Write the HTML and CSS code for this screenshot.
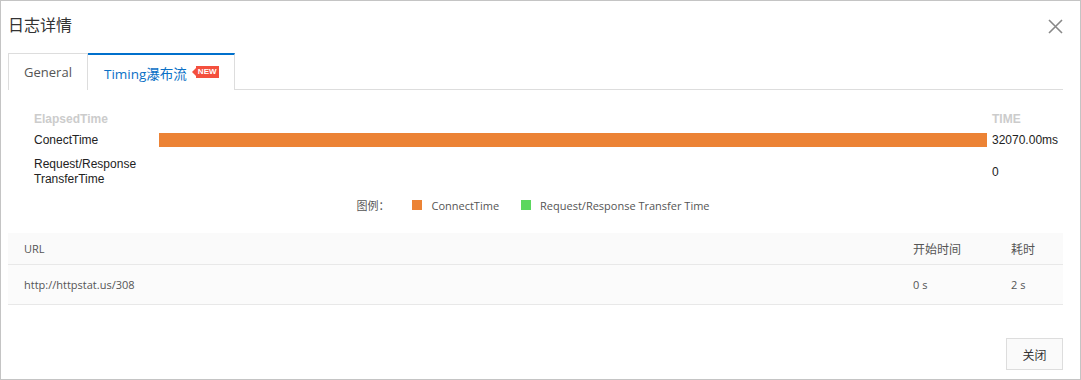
FILE: index.html
```html
<!DOCTYPE html>
<html lang="zh">
<head>
    <meta charset="UTF-8">
    <title>日志详情</title>
    <link rel="stylesheet" href="styles.css">
</head>
<body>
    <div class="dialog">
        <div class="dialog-header">
            <h2 class="dialog-title">日志详情</h2>
            <span class="dialog-close">
                <svg width="15" height="15" viewBox="0 0 15 15"><path d="M1 1L14 14M14 1L1 14" stroke="#888" stroke-width="1.6" fill="none"/></svg>
            </span>
        </div>
        <div class="tabs">
            <div class="tab">General</div>
            <div class="tab active">Timing瀑布流<span class="badge">NEW</span></div>
        </div>

        <div class="chart">
            <div class="chart-head">ElapsedTime</div>
            <div></div>
            <div class="chart-head chart-value">TIME</div>

            <div class="chart-label">ConectTime</div>
            <div class="chart-track"><div class="chart-bar connect" style="width: 100%"></div></div>
            <div class="chart-value">32070.00ms</div>

            <div class="chart-label">Request/Response<br>TransferTime</div>
            <div class="chart-track"><div class="chart-bar transfer" style="width: 0%"></div></div>
            <div class="chart-value">0</div>
        </div>

        <div class="legend">
            <span class="legend-title">图例：</span>
            <span class="legend-item"><i class="swatch connect"></i>ConnectTime</span>
            <span class="legend-item"><i class="swatch transfer"></i>Request/Response Transfer Time</span>
        </div>

        <table class="grid">
            <thead>
                <tr>
                    <th>URL</th>
                    <th class="col-start cjk">开始时间</th>
                    <th class="col-cost cjk">耗时</th>
                </tr>
            </thead>
            <tbody>
                <tr>
                    <td>http://httpstat.us/308</td>
                    <td>0 s</td>
                    <td>2 s</td>
                </tr>
            </tbody>
        </table>

        <div class="dialog-footer">
            <button class="btn">关闭</button>
        </div>
    </div>
</body>
</html>
```

FILE: styles.css
```css
body {
    margin: 0;
    padding: 0;
    font-family: "Open Sans", "Noto Sans CJK SC", sans-serif;
    color: #333;
    background: #fff;
}
.dialog {
    width: 1081px;
    height: 380px;
    box-sizing: border-box;
    border: 1px solid #c4c4c4;
    padding: 0 17px 0 7px;
    display: flex;
    flex-direction: column;
}
.dialog-header {
    height: 52px;
    display: flex;
    align-items: center;
    justify-content: space-between;
}
.dialog-title {
    margin: 0;
    font-size: 16px;
    font-weight: normal;
    font-family: "Noto Sans CJK SC", sans-serif;
    color: #333;
    position: relative;
    top: -3px;
}
.dialog-close {
    display: flex;
    position: relative;
    top: -1px;
}
.tabs {
    display: flex;
    height: 36px;
    border-bottom: 1px solid #ddd;
}
.tab {
    box-sizing: border-box;
    height: 37px;
    padding: 0 16px;
    display: flex;
    align-items: center;
    font-size: 13px;
    color: #555;
    border: 1px solid #ddd;
    border-bottom: none;
    background: #fff;
    margin-bottom: -1px;
}
.tab:first-child {
    width: 80px;
    justify-content: center;
    padding: 0;
}
.tab.active {
    color: #0a70c6;
    border-top: 2px solid #0070cc;
    border-left: none;
    font-size: 13.5px;
    padding-right: 15px;
}
.badge {
    position: relative;
    margin-left: 9px;
    background: #f4503e;
    color: #fff;
    font-family: "Liberation Sans", sans-serif;
    font-size: 8px;
    font-weight: bold;
    line-height: 12px;
    height: 12px;
    padding: 0 2px;
    top: -1px;
}
.badge::before {
    content: "";
    position: absolute;
    left: -4px;
    top: 2px;
    border-top: 4px solid transparent;
    border-bottom: 4px solid transparent;
    border-right: 4px solid #f4503e;
}
.chart {
    display: grid;
    grid-template-columns: 125px 828px auto;
    grid-template-rows: 14px 28px 36px;
    margin: 22px 0 0 26px;
    font-family: "Liberation Sans", Arial, sans-serif;
    font-size: 12px;
    align-items: center;
}
.chart-head {
    color: #ccc;
    font-weight: bold;
    line-height: 14px;
}
.chart-label, .chart-value {
    color: #222;
    line-height: 15px;
}
.chart-value {
    padding-left: 5px;
}
.chart-head.chart-value {
    color: #ccc;
}
.chart-track {
    height: 14px;
}
.chart-bar {
    height: 100%;
}
.connect {
    background: #ec8335;
}
.transfer {
    background: #5bd75e;
}
.legend {
    display: flex;
    justify-content: center;
    align-items: center;
    margin-top: 7px;
    height: 16px;
    font-size: 11px;
    color: #555;
    gap: 22px;
}
.legend-title {
    margin-right: 1px;
    margin-left: -5px;
    font-family: "Noto Sans CJK SC", sans-serif;
}
.legend-item {
    display: flex;
    align-items: center;
}
.swatch {
    display: inline-block;
    width: 10px;
    height: 10px;
    margin-right: 9px;
}
.grid {
    margin-top: 20px;
    width: 100%;
    border-collapse: collapse;
    font-size: 11px;
    color: #555;
}
.grid th {
    height: 31px;
    background: #fafafa;
    font-weight: normal;
    text-align: left;
    padding: 0 16px;
    border-bottom: 1px solid #e8e8e8;
}
.grid .cjk {
    font-size: 12px;
}
.grid td {
    height: 39px;
    background: #fbfbfb;
    padding: 0 16px;
    border-bottom: 1px solid #e8e8e8;
}
.grid .col-start {
    width: 66px;
}
.grid .col-cost {
    width: 36px;
}
.dialog-footer {
    margin-top: auto;
    display: flex;
    justify-content: flex-end;
    padding-bottom: 9px;
}
.btn {
    width: 57px;
    height: 32px;
    border: 1px solid #ddd;
    background: #fafafa;
    color: #333;
    font-size: 12px;
    font-family: "Noto Sans CJK SC", sans-serif;
}
```
